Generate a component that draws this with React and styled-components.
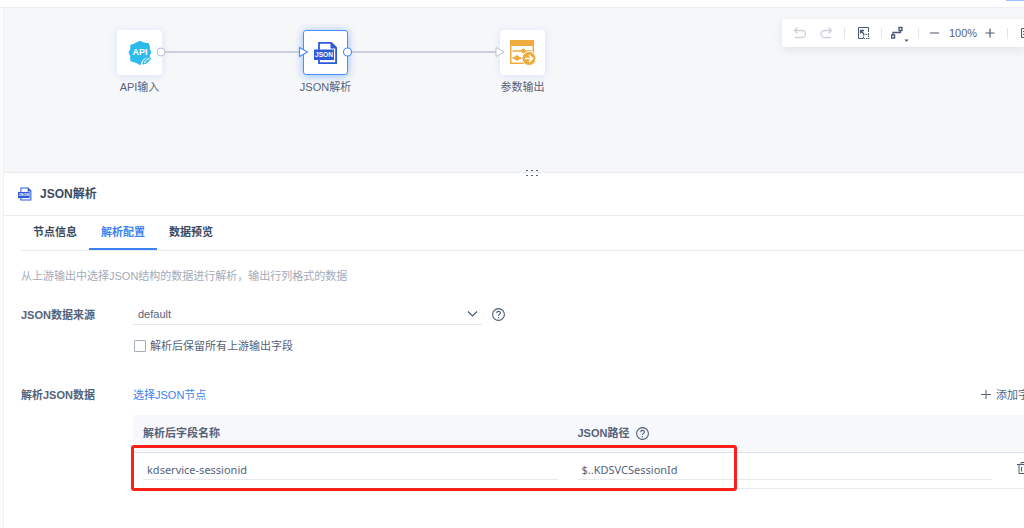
import React from "react";
import styled, { createGlobalStyle, css } from "styled-components";

const sans = '"Liberation Sans", Arial, "Noto Sans CJK SC", sans-serif';
const ink = "#55627a";
const dark = "#3c4960";
const blue = "#3d82f2";
const line = "#e9ebef";

const Global = createGlobalStyle`
  * { box-sizing: border-box; }
  body { margin: 0; background: #fff; color: ${ink}; font: 11px/16px ${sans}; overflow: hidden; }
  button, input, select { font: inherit; color: inherit; margin: 0; }
  button { border: 0; padding: 0; background: none; cursor: pointer; }
  svg { display: block; flex: none; }
`;

const Page = styled.div`
  display: flex;
  flex-direction: column;
  min-height: 100vh;
`;
const TopStrip = styled.div`
  height: 8px;
  flex: none;
  display: flex;
  justify-content: flex-end;
  border-bottom: 1px solid #eceef1;
`;
const TopMark = styled.div`
  width: 18px;
  height: 1px;
  background: #9dc1fa;
`;
const Body = styled.div`
  display: flex;
  flex: 1;
`;
const Rail = styled.div`
  width: 4px;
  flex: none;
  background: #fcfcfd;
  border-right: 1px solid #eeeff3;
`;
const Main = styled.main`
  flex: 1;
  min-width: 0;
`;

/* Flow canvas */
const Canvas = styled.section`
  position: relative;
  height: 165px;
  overflow: hidden;
  background: #f6f7f9;
  border-bottom: 1px solid ${line};
`;
const Links = styled.svg`
  position: absolute;
  left: 0;
  top: 0;
`;
const Node = styled.div`
  position: absolute;
  top: 22px;
  left: ${(p) => p.$x}px;
  width: 89px;
  display: flex;
  flex-direction: column;
  align-items: center;
  gap: 4px;
`;
const NodeBox = styled.div`
  width: 45px;
  height: 45px;
  display: flex;
  align-items: center;
  justify-content: center;
  background: #fff;
  border-radius: 3px;
  border: 1px solid ${(p) => (p.$active ? "#4a90f5" : "#fff")};
  box-shadow: 0 1px 8px ${(p) => (p.$active ? "#8fb9f9" : "#d6e3f8")};
`;

const Toolbar = styled.div`
  position: absolute;
  top: 11px;
  right: 0;
  width: 242px;
  height: 28px;
  padding-left: 8px;
  display: flex;
  align-items: center;
  gap: 9px;
  overflow: hidden;
  background: #fff;
  border-radius: 2px 0 0 2px;
  box-shadow: 0 3px 10px #dfe3ea;
`;
const Tool = styled.button`
  flex: none;
  color: ${(p) => (p.disabled ? "#cdd1d9" : "#4c5a73")};
`;
const Separator = styled.span`
  width: 1px;
  height: 11px;
  flex: none;
  background: #e1e4e9;
`;
const Zoom = styled.div`
  display: flex;
  align-items: center;
  gap: 3px;
  flex: none;
`;
const ZoomValue = styled.span`
  width: 28px;
  display: flex;
  justify-content: center;
`;

/* Settings panel */
const Handle = styled.div`
  position: relative;
  height: 0;
  display: flex;
  justify-content: center;
  align-items: center;
  padding-left: 36px;
`;
const Header = styled.header`
  height: 43px;
  display: flex;
  align-items: center;
  gap: 8px;
  padding-left: 14px;
  border-bottom: 1px solid ${line};
`;
const Title = styled.h1`
  margin: 0;
  font-size: 12px;
  line-height: 18px;
  color: ${dark};
`;
const Content = styled.div`
  padding-left: 17px;
`;
const Tabs = styled.nav`
  display: flex;
  border-bottom: 1px solid ${line};
`;
const Tab = styled.button`
  && {
    height: 34px;
    padding: 0 12px;
    font-weight: 700;
    color: ${dark};
    border-bottom: 2px solid transparent;
    ${(p) => p.$active && css`
      color: ${blue};
      border-color: ${blue};
    `}
  }
`;
const Hint = styled.p`
  margin: 17px 0 20px;
  color: #a3aab7;
`;
const Field = styled.div`
  display: flex;
  align-items: center;
  min-height: 20px;
`;
const Label = styled.label`
  width: 112px;
  flex: none;
  font-weight: 700;
`;
const SelectWrap = styled.div`
  position: relative;
  width: 349px;
  margin-right: 10px;
  border-bottom: 1px solid #e3e6ea;
  svg { position: absolute; right: 4px; top: 5px; pointer-events: none; }
`;
const Select = styled.select`
  appearance: none;
  display: block;
  width: 100%;
  height: 20px;
  padding: 0 20px 0 5px;
  border: 0;
  outline: 0;
  background: transparent;
`;
const CheckRow = styled.label`
  display: flex;
  align-items: center;
  gap: 4px;
  margin: 13px 0 31px 113px;
`;
const Check = styled.input`
  && {
    appearance: none;
    width: 12px;
    height: 12px;
    border: 1px solid #a4abbb;
    border-radius: 1px;
    background: #fff;
  }
`;
const Link = styled.a`
  color: ${blue};
  text-decoration: none;
`;
const Add = styled.button`
  margin-left: auto;
  width: 43px;
  overflow: hidden;
  display: flex;
  align-items: center;
  gap: 5px;
  white-space: nowrap;
`;
const TableWrap = styled.div`
  position: relative;
  margin: 10px 0 0 112px;
`;
const Table = styled.table`
  width: 100%;
  table-layout: fixed;
  border-collapse: collapse;
`;
const Th = styled.th`
  width: ${(p) => (p.$last ? "22px" : "auto")};
  height: 37px;
  padding: 0 10px;
  text-align: left;
  background: #f7f8fb;
  border-bottom: 1px solid #dcdeeb;
`;
const ThInner = styled.span`
  display: flex;
  align-items: center;
  gap: 7px;
`;
const Td = styled.td`
  height: 36px;
  padding: ${(p) => (p.$last ? "0 0 0 15px" : "0 10px")};
  border-bottom: 1px solid #e8eaf1;
  overflow: hidden;
`;
const TextInput = styled.input`
  && {
    display: block;
    width: 100%;
    height: 20px;
    padding: 0 4px;
    border: 0;
    border-bottom: 1px solid #e7e9ed;
    outline: 0;
    background: transparent;
    font-family: "Noto Sans", "Noto Sans CJK SC", sans-serif;
  }
`;
const Highlight = styled.div`
  position: absolute;
  left: -2px;
  top: 30px;
  width: 68%;
  height: 46px;
  border: 3px solid #fb2118;
  border-radius: 3px;
  pointer-events: none;
`;

const Icon = ({ size = 18, children }) => (
  <svg width={size} height={size} viewBox={`0 0 ${size} ${size}`} fill="none" stroke="currentColor" aria-hidden="true">
    {children}
  </svg>
);

const Help = () => (
  <svg width="13" height="13" viewBox="0 0 13 13" fill="none" stroke="#4c5a73" strokeWidth="1.1" aria-label="帮助">
    <circle cx="6.5" cy="6.5" r="5.9" />
    <path d="M4.7 5.2c0-2.5 3.7-2.4 3.7-.2 0 1.4-1.9 1.4-1.9 3M6.5 9v1.2" />
  </svg>
);

const ApiIcon = () => (
  <svg width="24" height="26" viewBox="0 0 24 26" aria-hidden="true">
    <path d="M9 3l3-1.400L15 3l2.600.800H20l1.200 2.800L21 9l1.700 3-1.700 3.500v4L18 21l-3 1.500-3 2-3-2L6 21.500l-3-1V16l-1.700-3.500L3 9.500v-4l3-1z" fill="#2cbbea" stroke="#2cbbea" strokeWidth="1.5" strokeLinejoin="round" />
    <path d="M12.500 26c.300-6 4.700-9.300 11.500-9v9z" fill="#fff" />
    <path d="M15 24l.800-3 4.200-3.600c1.200-.700 2.800.800 2 2l-4.200 3.700zM17.500 22.300l3-2.600" fill="none" stroke="#2cbbea" strokeWidth="1.3" strokeLinejoin="round" />
    <text x="12" y="14.500" textAnchor="middle" fontFamily="Liberation Sans, sans-serif" fontWeight="700" fontSize="9" fill="#fff">API</text>
  </svg>
);

const JsonIcon = ({ width = 24, height = 24 }) => (
  <svg width={width} height={height} viewBox="0 0 24 24" aria-hidden="true">
    <path d="M5 9V1.800h12.300l4.800 4.800v15.600H5V17" fill="#fff" stroke="#2d5bd8" strokeWidth="1.800" />
    <path d="M16.500 1.500v6h6z" fill="#2d5bd8" />
    <path d="M0 8.500h20v10.500H0z" fill="#2d5bd8" />
    <text x="10" y="16.200" textAnchor="middle" fontFamily="Liberation Sans, sans-serif" fontWeight="700" fontSize="6.600" fill="#fff">JSON</text>
  </svg>
);

const OutputIcon = () => (
  <svg width="27" height="27" viewBox="0 0 27 27" aria-hidden="true">
    <path d="M1 1h24v24H1z" fill="#efab3c" />
    <path d="M2.500 7h21v16.500h-21z" fill="#fff" />
    <path d="M3.500 12h19M3.500 19h11" stroke="#efab3c" strokeWidth="1.5" />
    <path d="M12 12l2.4-2.3L17 12l-2.5 2.3zM4.500 19L8 16.500l3.500 2.500L8 21.500z" fill="#efab3c" stroke="#efab3c" />
    <circle cx="20" cy="19.500" r="7" fill="#efab3c" stroke="#fff" />
    <path d="M16 19.500h7.500m-3.500-3.500l3.500 3.500-3.500 3.500" fill="none" stroke="#fff" strokeWidth="1.6" />
  </svg>
);

export default function App() {
  return (
    <>
      <Global />
      <Page>
        <TopStrip><TopMark /></TopStrip>
        <Body>
          <Rail />
          <Main>
            <Canvas>
              <Node $x={91}>
                <NodeBox><ApiIcon /></NodeBox>
                API输入
              </Node>
              <Node $x={277}>
                <NodeBox $active><JsonIcon /></NodeBox>
                JSON解析
              </Node>
              <Node $x={474}>
                <NodeBox><OutputIcon /></NodeBox>
                参数输出
              </Node>
              <Links width="560" height="100" fill="#fff" aria-hidden="true">
                <path d="M161 44h135M348 44h145" stroke="#bcc3ce" strokeWidth="1.500" />
                <circle cx="157" cy="44" r="4" stroke="#bcc3ce" />
                <circle cx="343.500" cy="44" r="4" stroke="#4a90f5" strokeWidth="1.200" />
                <path d="M295.500 39.500l8 4.500-8 4.500z" stroke="#4a90f5" strokeWidth="1.200" />
                <path d="M492 39.500l8 4.500-8 4.500z" stroke="#bcc3ce" />
              </Links>
              <Toolbar>
                <Tool disabled aria-label="撤销">
                  <Icon><path d="M7.500 3.500l-3 3 3 3M4.500 6.500H12a3.500 3.500 0 0 1 0 7H5" strokeWidth="1.300" /></Icon>
                </Tool>
                <Tool disabled aria-label="重做">
                  <Icon><path d="M11.500 3.500l3 3-3 3M14.500 6.500H7.500a3.500 3.500 0 0 0 0 7H14" strokeWidth="1.300" /></Icon>
                </Tool>
                <Separator />
                <Tool aria-label="适应画布">
                  <Icon>
                    <path d="M9 14.500H4.500v-11h10V8" />
                    <path d="M10 10L6.500 6.500M6.500 9.500V6.500H10" strokeWidth="1.300" />
                    <path d="M9.500 10v5M9 10.500h6M9.500 14.500h6M14.500 9v6" strokeDasharray="1.500 1" />
                  </Icon>
                </Tool>
                <Separator />
                <Tool aria-label="连线样式">
                  <Icon>
                    <path d="M.600 11h3v3h-3zM8 3.500h3v3H8zM2 11V8.500h7.500v-2" strokeWidth="1.300" />
                    <path d="M13.500 15.500h4l-2 2.500z" fill="currentColor" stroke="none" />
                  </Icon>
                </Tool>
                <Separator />
                <Zoom>
                  <Tool aria-label="缩小"><Icon><path d="M2 9h9" strokeWidth="1.200" /></Icon></Tool>
                  <ZoomValue>100%</ZoomValue>
                  <Tool aria-label="放大"><Icon><path d="M5.500 9h9M10 4.500v9" strokeWidth="1.200" /></Icon></Tool>
                </Zoom>
                <Separator />
                <Tool aria-label="列表"><Icon><path d="M4.500 4.500h10v9h-10zM6 7.500h6M6 10.500h6" /></Icon></Tool>
              </Toolbar>
            </Canvas>

            <Handle>
              <svg width="12" height="8" viewBox="0 0 12 8" fill="#596377" aria-hidden="true">
                <path d="M0 1h2v1H0zM5 1h2v1H5zM10 1h2v1h-2zM0 6h2v1H0zM5 6h2v1H5zM10 6h2v1h-2z" />
              </svg>
            </Handle>

            <section>
              <Header>
                <JsonIcon width={14} height={14} />
                <Title>JSON解析</Title>
              </Header>
              <Content>
                <Tabs>
                  <Tab>节点信息</Tab>
                  <Tab $active>解析配置</Tab>
                  <Tab>数据预览</Tab>
                </Tabs>
                <Hint>从上游输出中选择JSON结构的数据进行解析，输出行列格式的数据</Hint>
                <Field>
                  <Label htmlFor="source">JSON数据来源</Label>
                  <SelectWrap>
                    <Select id="source" defaultValue="default">
                      <option value="default">default</option>
                    </Select>
                    <svg width="11" height="10" viewBox="0 0 11 10" fill="none" stroke="#4c5a73" strokeWidth="1.200" aria-hidden="true">
                      <path d="M1 2.500l4.500 4.500L10 2.500" />
                    </svg>
                  </SelectWrap>
                  <Help />
                </Field>
                <CheckRow>
                  <Check type="checkbox" />
                  解析后保留所有上游输出字段
                </CheckRow>
                <Field>
                  <Label as="span">解析JSON数据</Label>
                  <Link href="#nodes">选择JSON节点</Link>
                  <Add>
                    <Icon size={10}><path d="M0 4.500h10M5 0v9" /></Icon>
                    添加字段
                  </Add>
                </Field>
                <TableWrap>
                  <Table>
                    <thead>
                      <tr>
                        <Th>解析后字段名称</Th>
                        <Th><ThInner>JSON路径<Help /></ThInner></Th>
                        <Th $last aria-label="操作" />
                      </tr>
                    </thead>
                    <tbody>
                      <tr>
                        <Td><TextInput aria-label="解析后字段名称" defaultValue="kdservice-sessionid" /></Td>
                        <Td><TextInput aria-label="JSON路径" defaultValue="$..KDSVCSessionId" /></Td>
                        <Td $last>
                          <Tool aria-label="删除">
                            <Icon size={12}><path d="M0 2.500h12M4 2V.5h4V2M2 3v8.500h8V3M4.500 5v4.500M7.500 5v4.500" /></Icon>
                          </Tool>
                        </Td>
                      </tr>
                    </tbody>
                  </Table>
                  <Highlight />
                </TableWrap>
              </Content>
            </section>
          </Main>
        </Body>
      </Page>
    </>
  );
}
